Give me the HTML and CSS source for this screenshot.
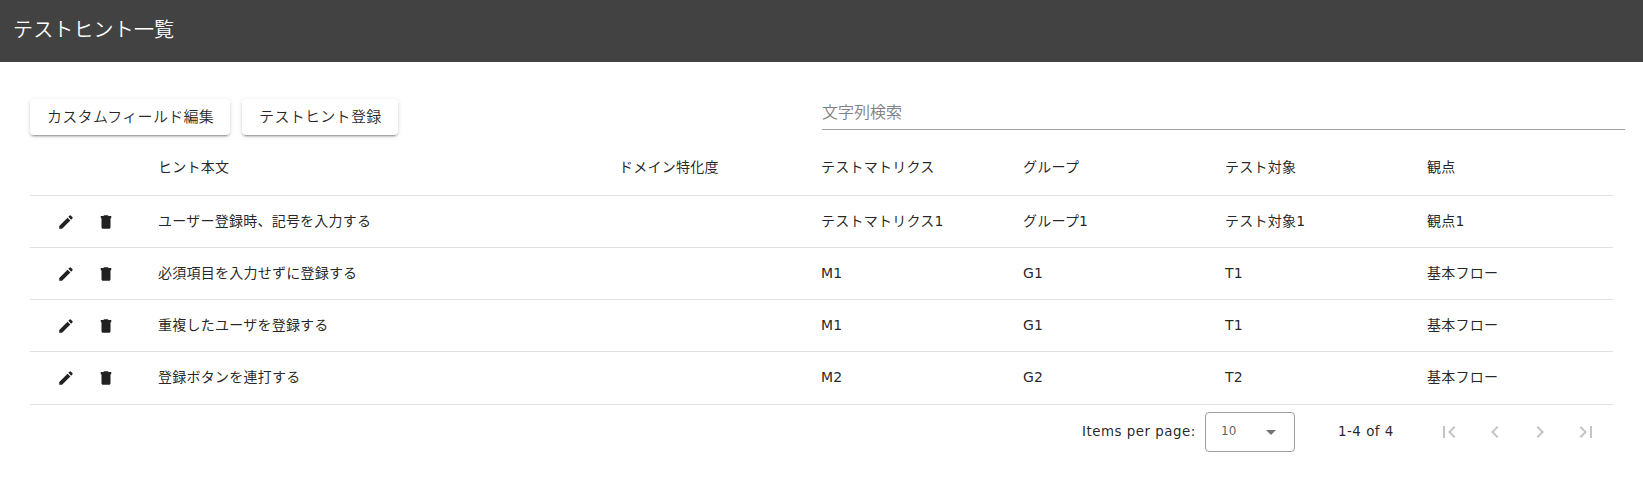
FILE: index.html
```html
<!DOCTYPE html>
<html lang="ja">
<head>
<meta charset="utf-8">
<title>テストヒント一覧</title>
<link rel="stylesheet" href="styles.css">
</head>
<body>
<svg width="0" height="0" class="defs">
  <symbol id="edit" viewBox="0 0 24 24"><path d="M3 17.25V21h3.75L17.81 9.94l-3.75-3.75L3 17.25zM20.71 7.04a.996.996 0 0 0 0-1.41l-2.34-2.34a.996.996 0 0 0-1.41 0l-1.83 1.83 3.75 3.75 1.83-1.83z"/></symbol>
  <symbol id="delete" viewBox="0 0 24 24"><path d="M6 19c0 1.1.9 2 2 2h8c1.1 0 2-.9 2-2V7H6v12zM19 4h-3.5l-1-1h-5l-1 1H5v3h14V4z"/></symbol>
</svg>
<header class="toolbar"><h1 class="title">テストヒント一覧</h1></header>
<main class="content">
  <div class="actions">
    <div class="buttons">
      <button class="btn">カスタムフィールド編集</button>
      <button class="btn">テストヒント登録</button>
    </div>
    <input class="search" type="text" placeholder="文字列検索">
  </div>
  <div class="table">
    <div class="row head"><span></span><span>ヒント本文</span><span>ドメイン特化度</span><span>テストマトリクス</span><span>グループ</span><span>テスト対象</span><span>観点</span></div>
    <div class="row"><span class="tools"><svg><use href="#edit"/></svg><svg><use href="#delete"/></svg></span><span>ユーザー登録時、記号を入力する</span><span></span><span>テストマトリクス1</span><span>グループ1</span><span>テスト対象1</span><span>観点1</span></div>
    <div class="row"><span class="tools"><svg><use href="#edit"/></svg><svg><use href="#delete"/></svg></span><span>必須項目を入力せずに登録する</span><span></span><span>M1</span><span>G1</span><span>T1</span><span>基本フロー</span></div>
    <div class="row"><span class="tools"><svg><use href="#edit"/></svg><svg><use href="#delete"/></svg></span><span>重複したユーザを登録する</span><span></span><span>M1</span><span>G1</span><span>T1</span><span>基本フロー</span></div>
    <div class="row last"><span class="tools"><svg><use href="#edit"/></svg><svg><use href="#delete"/></svg></span><span>登録ボタンを連打する</span><span></span><span>M2</span><span>G2</span><span>T2</span><span>基本フロー</span></div>
  </div>
  <div class="paginator">
    <span class="per-page">Items per page:</span>
    <div class="select"><span>10</span><i class="arrow"></i></div>
    <span class="range">1-4 of 4</span>
    <div class="nav">
      <svg viewBox="0 0 24 24"><path d="M18.41 16.59L13.82 12l4.59-4.59L17 6l-6 6 6 6zM6 6h2v12H6z"/></svg>
      <svg viewBox="0 0 24 24"><path d="M15.41 7.41L14 6l-6 6 6 6 1.41-1.41L10.83 12z"/></svg>
      <svg viewBox="0 0 24 24"><path d="M10 6L8.59 7.41 13.17 12l-4.58 4.59L10 18l6-6z"/></svg>
      <svg viewBox="0 0 24 24"><path d="M5.59 7.41L10.18 12l-4.59 4.59L7 18l6-6-6-6zM16 6h2v12h-2z"/></svg>
    </div>
  </div>
</main>
</body>
</html>
```
FILE: styles.css
```css
* { box-sizing: border-box; }
body {
  margin: 0;
  background: #fff;
  color: rgba(0, 0, 0, .87);
  font-family: "DejaVu Sans", "Noto Sans CJK JP", sans-serif;
  font-size: 14px;
  font-weight: 400;
}
.defs { display: none; }
.toolbar {
  display: flex;
  align-items: center;
  height: 62px;
  padding: 0 13px 4px;
  background: #424242;
}
.title {
  margin: 0;
  color: #fff;
  font-family: "Noto Sans CJK JP", sans-serif;
  font-size: 20px;
  font-weight: 350;
  line-height: 32px;
  letter-spacing: .15px;
}
.content { padding: 34px 18px 0 30px; }
.actions {
  display: flex;
  justify-content: space-between;
  height: 44px;
}
.buttons { display: flex; gap: 12px; padding-top: 3px; }
.btn {
  height: 36px;
  padding: 0 16px 3px 17px;
  border: 0;
  border-radius: 4px;
  background: #fff;
  color: rgba(0, 0, 0, .87);
  box-shadow: 0 3px 1px -2px rgba(0, 0, 0, .2), 0 2px 2px rgba(0, 0, 0, .14), 0 1px 5px rgba(0, 0, 0, .12);
  font: 350 15px "Noto Sans CJK JP", sans-serif;
  letter-spacing: .3px;
}
.search {
  width: 803px;
  height: 34px;
  padding: 0 0 3px;
  border: 0;
  border-bottom: 1px solid #a0a0a0;
  outline: 0;
  font: 350 16px "Noto Sans CJK JP", sans-serif;
}
.search::placeholder { color: #808080; opacity: 1; }
.table {
  width: 1583px;
  letter-spacing: .24px;
}
.row {
  display: grid;
  grid-template-columns: 112px 461px repeat(5, 202px);
  align-items: center;
  height: 52px;
  padding-bottom: 2px;
  border-bottom: 1px solid #e0e0e0;
}
.row > span { padding-left: 16px; line-height: 20px; }
.head { height: 56px; }
.last { height: 53px; padding-bottom: 2px; }
.row > .tools { display: flex; gap: 22px; padding: 2px 0 0 27px; }
.tools svg { width: 18px; height: 18px; fill: #212121; }
.paginator {
  display: flex;
  align-items: center;
  height: 54px;
  padding-left: 1052px;
}
.per-page { width: 123px; padding-bottom: 2px; white-space: nowrap; font-size: 13.4px; letter-spacing: .5px; }
.select {
  display: flex;
  align-items: center;
  justify-content: space-between;
  width: 90px;
  height: 40px;
  padding: 0 18px 0 15px;
  border: 1px solid #9e9e9e;
  border-radius: 4px;
  color: rgba(0, 0, 0, .65);
  font-size: 12px;
}
.select span { padding-bottom: 2px; }
.arrow { border: 5px solid transparent; border-top-color: #757575; border-bottom: 0; }
.range { width: 90px; margin-left: 43px; padding-bottom: 2px; white-space: nowrap; font-size: 13.4px; letter-spacing: .5px; }
.nav { display: flex; gap: 21.6px; padding-left: 9px; }
.nav svg { width: 24px; height: 24px; fill: #c4c4c4; }
```
